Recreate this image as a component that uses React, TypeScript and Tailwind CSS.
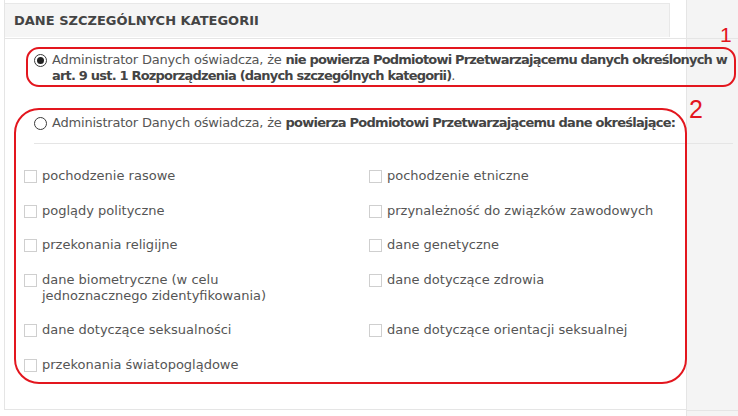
const leftItems = [
  "pochodzenie rasowe",
  "poglądy polityczne",
  "przekonania religijne",
  "dane biometryczne (w celu jednoznacznego zidentyfikowania)",
  "dane dotyczące seksualności",
  "przekonania światopoglądowe",
];

const rightItems = [
  "pochodzenie etniczne",
  "przynależność do związków zawodowych",
  "dane genetyczne",
  "dane dotyczące zdrowia",
  "dane dotyczące orientacji seksualnej",
];

function Checkbox({ label }: { label: string }) {
  return (
    <label className="flex items-start gap-[5px]">
      <span className="mt-[2px] h-[13px] w-[13px] shrink-0 border border-[#cfcfcf] bg-white" />
      <span className="max-w-[270px] leading-4">{label}</span>
    </label>
  );
}

function Radio({ checked }: { checked?: boolean }) {
  return (
    <span className="mt-[2px] flex h-[13px] w-[13px] shrink-0 items-center justify-center rounded-full border border-[#3a3a3a] bg-white">
      {checked && <span className="h-[7px] w-[7px] rounded-full bg-[#222]" />}
    </span>
  );
}

export default function App() {
  const rows = leftItems.map((l, i) => [l, rightItems[i]]);

  return (
    <div className="relative flex h-[416px] w-[738px] overflow-hidden bg-white font-['DejaVu_Sans','Liberation_Sans',sans-serif] text-[13px] text-[#555]">
      {/* main column */}
      <div className="relative z-10 w-[686px] shrink-0 pl-1">
        <div className="h-[410px] border-b border-l border-[#e5e5e5]">
          <div className="h-[39px] border-b border-[#e5e5e5] pt-[3px]">
            <div className="flex h-[34px] w-[665px] items-center border-r border-t border-[#e8e8e8] bg-[#f5f5f5] pl-[9px] font-bold text-[#444]">
              DANE SZCZEGÓLNYCH KATEGORII
            </div>
          </div>

          {/* option 1 */}
          <div className="ml-[29px] mt-[13px] flex items-start gap-[5px]">
            <Radio checked />
            <p className="whitespace-nowrap leading-4 tracking-[-0.2px]">
              Administrator Danych oświadcza, że{" "}
              <b className="tracking-[-0.8px] text-[#444]">
                nie powierza Podmiotowi Przetwarzającemu danych określonych w
                <br />
                art. 9 ust. 1 Rozporządzenia (danych szczególnych kategorii)
              </b>
              .
            </p>
          </div>

          {/* option 2 */}
          <div className="ml-[29px] mt-[31px] flex items-start gap-[5px]">
            <Radio />
            <p className="whitespace-nowrap leading-4 tracking-[-0.2px]">
              Administrator Danych oświadcza, że{" "}
              <b className="tracking-[-0.75px] text-[#444]">powierza Podmiotowi Przetwarzającemu dane określające:</b>
            </p>
          </div>

          <div className="ml-[29px] mt-[12px] h-px w-[699px] bg-[#e5e5e5]" />

          <div className="ml-[19px] mt-[24px] grid grid-cols-[345px_300px] gap-y-[18.5px]">
            {rows.map(([l, r]) => (
              <div key={l} className="contents">
                <Checkbox label={l} />
                {r ? <Checkbox label={r} /> : <div />}
              </div>
            ))}
          </div>
        </div>
      </div>

      {/* right sidebar */}
      <div className="flex-1 border-l border-[#e5e5e5] bg-[#f4f4f4]">
        <div className="h-[411px] border-b border-[#e5e5e5]">
          <div className="h-[39px] border-b border-[#e5e5e5]" />
        </div>
      </div>

      {/* red annotations */}
      <div className="pointer-events-none absolute left-[26px] top-[47px] z-20 h-[40px] w-[710px] rounded-[13px] border-2 border-[#e3161e]" />
      <span className="pointer-events-none absolute left-[720px] top-[24px] z-20 font-['Liberation_Sans',sans-serif] text-[21px] leading-none text-[#e3161e]">
        1
      </span>
      <div className="pointer-events-none absolute left-[14px] top-[108px] z-20 h-[276px] w-[673px] rounded-[25px] border-2 border-[#e3161e]" />
      <span className="pointer-events-none absolute left-[689px] top-[97px] z-20 font-['Liberation_Sans',sans-serif] text-[25px] leading-none text-[#e3161e]">
        2
      </span>
    </div>
  );
}
